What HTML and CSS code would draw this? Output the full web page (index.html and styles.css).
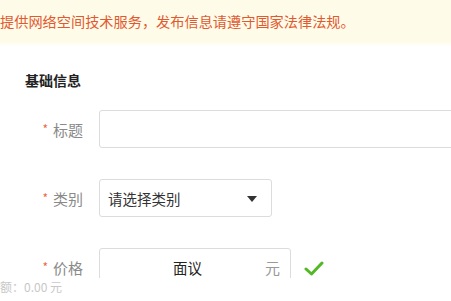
FILE: index.html
```html
<!DOCTYPE html>
<html lang="zh-CN">
<head>
<meta charset="utf-8">
<link rel="stylesheet" href="styles.css">
</head>
<body>
<div class="notice">提供网络空间技术服务，发布信息请遵守国家法律法规。</div>
<div class="notice-fade"></div>
<div class="form">
  <div class="section-title">基础信息</div>
  <div class="row">
    <label class="label"><span class="star">*</span>标题</label>
    <div class="field field-title"></div>
  </div>
  <div class="row">
    <label class="label"><span class="star">*</span>类别</label>
    <div class="field field-select">
      <span class="select-text">请选择类别</span>
      <svg class="caret" width="10" height="6" viewBox="0 0 10 6"><path d="M0 0 L10 0 L5 6 Z" fill="#333"/></svg>
    </div>
  </div>
  <div class="row">
    <label class="label"><span class="star">*</span>价格</label>
    <div class="field field-price">
      <span class="price-value">面议</span>
      <span class="unit">元</span>
    </div>
    <svg class="check" width="20" height="17" viewBox="0 0 20 17"><path d="M2 9 L7.5 14 L18 3" fill="none" stroke="#52b826" stroke-width="3" stroke-linecap="round" stroke-linejoin="round"/></svg>
  </div>
</div>
<div class="footer">额：0.00 元</div>
</body>
</html>
```
FILE: styles.css
```css
html, body {
  margin: 0;
  padding: 0;
  background: #fff;
  font-family: "Noto Sans CJK SC", "Noto Sans", sans-serif;
  overflow: hidden;
}
.notice {
  height: 41px;
  line-height: 42px;
  background: #fffbe9;
  color: #df5a30;
  font-size: 14.2px;
  white-space: nowrap;
  padding-left: 0;
}
.notice-fade {
  height: 6px;
  background: linear-gradient(#fffbe9, #fff);
}
.form {
  padding-top: 23px;
}
.section-title {
  padding-left: 25px;
  font-size: 14px;
  font-weight: bold;
  color: #222;
  line-height: 20px;
  height: 20px;
  margin-bottom: 20px;
}
.row {
  display: flex;
  align-items: center;
  height: 38px;
  margin-bottom: 31px;
}
.row:last-child {
  margin-bottom: 0;
}
.label {
  width: 99px;
  box-sizing: border-box;
  padding-right: 16px;
  text-align: right;
  font-size: 15px;
  color: #8a8a8a;
  flex: none;
}
.star {
  color: #e8694a;
  font-size: 12px;
  margin-right: 5px;
  position: relative;
  top: -2px;
}
.field {
  box-sizing: border-box;
  height: 38px;
  border: 1px solid #dcdcdc;
  border-radius: 3px;
  display: flex;
  align-items: center;
  flex: none;
}
.field-title {
  width: 370px;
}
.field-select {
  width: 173px;
  padding: 0 14px 0 8px;
  justify-content: space-between;
}
.select-text {
  font-size: 14.5px;
  color: #333;
}
.caret {
  margin-top: 1px;
}
.field-price {
  width: 192px;
  padding-right: 10px;
}
.price-value {
  flex: 1;
  text-align: center;
  padding-left: 10px;
  font-size: 14.5px;
  color: #222;
}
.unit {
  font-size: 15px;
  color: #999;
}
.check {
  margin-left: 13px;
  margin-top: 2px;
}
.footer {
  position: fixed;
  left: 0;
  right: 0;
  bottom: 0;
  height: 23px;
  line-height: 18px;
  background: #fff;
  color: #c8c8c8;
  font-size: 12px;
  white-space: nowrap;
}
```
